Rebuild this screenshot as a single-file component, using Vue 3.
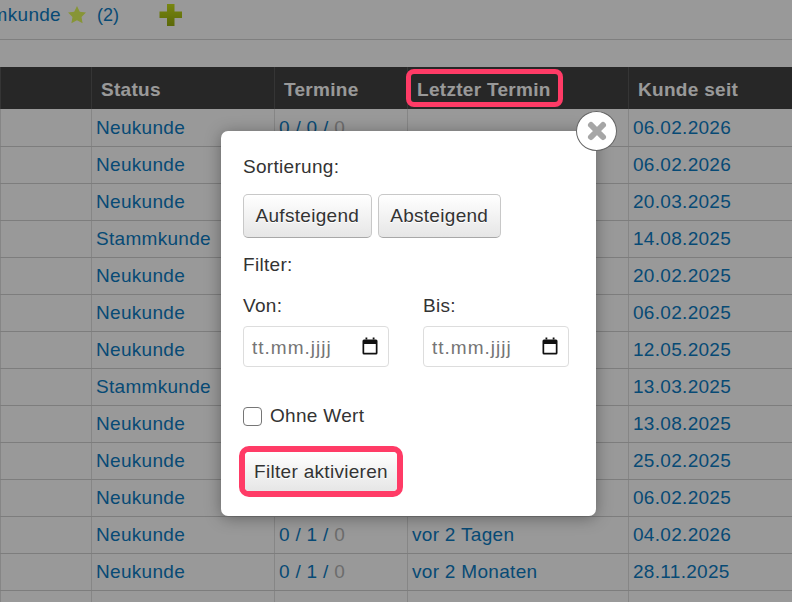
<script setup>
const rows = [
  { status: 'Neukunde', termine: [0, 0, 0], last: '', since: '06.02.2026' },
  { status: 'Neukunde', termine: null, last: '', since: '06.02.2026' },
  { status: 'Neukunde', termine: null, last: '', since: '20.03.2025' },
  { status: 'Stammkunde', termine: null, last: '', since: '14.08.2025' },
  { status: 'Neukunde', termine: null, last: '', since: '20.02.2025' },
  { status: 'Neukunde', termine: null, last: '', since: '06.02.2025' },
  { status: 'Neukunde', termine: null, last: '', since: '12.05.2025' },
  { status: 'Stammkunde', termine: null, last: '', since: '13.03.2025' },
  { status: 'Neukunde', termine: null, last: '', since: '13.08.2025' },
  { status: 'Neukunde', termine: null, last: '', since: '25.02.2025' },
  { status: 'Neukunde', termine: null, last: '', since: '06.02.2025' },
  { status: 'Neukunde', termine: [0, 1, 0], last: 'vor 2 Tagen', since: '04.02.2026' },
  { status: 'Neukunde', termine: [0, 1, 0], last: 'vor 2 Monaten', since: '28.11.2025' },
  { status: 'Neukunde', termine: [0, 1, 0], last: 'vor 3 Monaten', since: '11.11.2025' }
]
</script>

<template>
  <div class="page">
    <div class="topbar">
      <div class="clip"><a>Stammkunde</a></div>
      <svg class="star" width="24" height="24" viewBox="0 0 24 24">
        <path d="M12 3l2.800 5.700 6.200.9-4.500 4.400 1.100 6.200-5.600-2.900-5.600 2.900 1.100-6.200L3 9.600l6.200-.9z" fill="#e2f85c" stroke="#fff" stroke-width="4" stroke-linejoin="round" paint-order="stroke" />
      </svg>
      <a class="count">(2)</a>
      <svg class="plus" width="24" height="24" viewBox="0 0 24 24">
        <defs>
          <linearGradient id="plusfill" x1="0" y1="0" x2="0" y2="1">
            <stop offset="0" stop-color="#c8e01c" />
            <stop offset="1" stop-color="#98ae0e" />
          </linearGradient>
        </defs>
        <path d="M8 1h7.500v7.500H23V15h-7.500v8H8v-8H0.500V8.500H8z" fill="url(#plusfill)" />
      </svg>
    </div>
    <div class="stripe"></div>

    <table class="grid">
      <colgroup>
        <col style="width: 91px" />
        <col style="width: 183px" />
        <col style="width: 133px" />
        <col style="width: 221px" />
        <col style="width: 164px" />
      </colgroup>
      <thead>
        <tr>
          <th></th>
          <th>Status</th>
          <th>Termine</th>
          <th>Letzter Termin</th>
          <th>Kunde seit</th>
        </tr>
      </thead>
      <tbody>
        <tr v-for="(row, i) in rows" :key="i">
          <td></td>
          <td>{{ row.status }}</td>
          <td>
            <template v-if="row.termine">{{ row.termine[0] }} / {{ row.termine[1] }} / <span class="muted">{{ row.termine[2] }}</span></template>
          </td>
          <td>{{ row.last }}</td>
          <td>{{ row.since }}</td>
        </tr>
      </tbody>
    </table>

    <div class="overlay"></div>
    <div class="mark-head"></div>

    <div class="dialog">
      <div class="close">
        <svg width="24" height="24" viewBox="0 0 24 24">
          <path d="M6 6L18 18M18 6L6 18" stroke="#a6a6a6" stroke-width="6" stroke-linecap="round" />
        </svg>
      </div>
      <div class="label">Sortierung:</div>
      <div class="sort">
        <button class="btn">Aufsteigend</button>
        <button class="btn">Absteigend</button>
      </div>
      <div class="label filter">Filter:</div>
      <div class="dates">
        <div class="field">
          <div class="label">Von:</div>
          <div class="date">
            <span>tt.mm.jjjj</span>
            <svg width="18" height="20" viewBox="0 0 18 20">
              <path d="M3 3.500h12A1.500 1.500 0 0 1 16.500 5v12a1.500 1.500 0 0 1-1.500 1.500H3A1.500 1.500 0 0 1 1.500 17V5A1.500 1.500 0 0 1 3 3.500zM3.200 8v8.800h11.600V8z" fill="#111" fill-rule="evenodd" />
              <path d="M4.500 1.500h1.800v2H4.500zM11.700 1.500h1.800v2h-1.800z" fill="#111" />
            </svg>
          </div>
        </div>
        <div class="field">
          <div class="label">Bis:</div>
          <div class="date">
            <span>tt.mm.jjjj</span>
            <svg width="18" height="20" viewBox="0 0 18 20">
              <path d="M3 3.500h12A1.500 1.500 0 0 1 16.500 5v12a1.500 1.500 0 0 1-1.500 1.500H3A1.500 1.500 0 0 1 1.500 17V5A1.500 1.500 0 0 1 3 3.500zM3.200 8v8.800h11.600V8z" fill="#111" fill-rule="evenodd" />
              <path d="M4.500 1.500h1.800v2H4.500zM11.700 1.500h1.800v2h-1.800z" fill="#111" />
            </svg>
          </div>
        </div>
      </div>
      <label class="check">
        <span class="box"></span>
        <span>Ohne Wert</span>
      </label>
      <div class="mark-btn">
        <button class="btn apply">Filter aktivieren</button>
      </div>
    </div>
  </div>
</template>

<style>
html, body {
  margin: 0;
  overflow: hidden;
}
</style>

<style scoped>
.page {
  position: relative;
  width: 792px;
  height: 602px;
  overflow: hidden;
  background: #fff;
  font-family: "Liberation Sans", Arial, sans-serif;
  font-size: 19px;
  letter-spacing: 0.3px;
  color: #333;
}

.topbar {
  display: flex;
  align-items: center;
  height: 28px;
  padding: 1px 0 10px;
  border-bottom: 1px solid #d4d4d4;
  color: #0c7cc4;
}

.clip {
  width: 61px;
  overflow: hidden;
  display: flex;
  justify-content: flex-end;
  white-space: nowrap;
}

.star {
  margin-left: 4px;
}

.count {
  margin-left: 8px;
  font-size: 18px;
  letter-spacing: 0;
}

.plus {
  margin-left: 40px;
  margin-top: -1px;
}

.stripe {
  height: 27px;
}

.grid {
  table-layout: fixed;
  border-collapse: collapse;
  width: 792px;
}

.grid th {
  height: 42px;
  padding: 3px 9px 0;
  background: #414141;
  border-left: 1px solid #595959;
  color: #fff;
  font-weight: bold;
  text-align: left;
  box-sizing: border-box;
}

.grid td {
  height: 37px;
  padding: 1px 4px 0;
  border-left: 1px solid #e0e0e0;
  border-bottom: 1px solid #d0d0d0;
  color: #0c7cc4;
  box-sizing: border-box;
  white-space: nowrap;
}

.muted {
  color: #b5b5b5;
}

.overlay {
  position: absolute;
  inset: 0;
  background: rgba(0, 0, 0, 0.4);
}

.mark-head {
  position: absolute;
  left: 406px;
  top: 69px;
  width: 157px;
  height: 38px;
  box-sizing: border-box;
  border: 5px solid #ff3b66;
  border-radius: 8px;
}

.dialog {
  position: absolute;
  left: 221px;
  top: 131px;
  width: 375px;
  height: 385px;
  box-sizing: border-box;
  padding: 25px 22px 0;
  background: #fff;
  border-radius: 7px;
  box-shadow: 0 2px 16px rgba(0, 0, 0, 0.35);
}

.close {
  position: absolute;
  left: 355px;
  top: -20px;
  width: 41px;
  height: 40px;
  box-sizing: border-box;
  border: 1px solid #666;
  border-radius: 50%;
  background: #fff;
  display: flex;
  align-items: center;
  justify-content: center;
}

.close svg {
  filter: blur(0.6px);
}

.label {
  line-height: 22px;
}

.sort {
  display: flex;
  gap: 6px;
  margin-top: 16px;
}

.btn {
  height: 44px;
  padding: 0 11.5px;
  border: 1px solid #c8c8c8;
  border-bottom-color: #a8a8a8;
  border-radius: 5px;
  background: linear-gradient(#fff, #e6e6e6);
  font: inherit;
  letter-spacing: inherit;
  color: #333;
  text-shadow: 0 1px 0 #fff;
}

.filter {
  margin-top: 16px;
}

.dates {
  display: flex;
  gap: 34px;
  margin-top: 19px;
}

.field .date {
  margin-top: 9px;
}

.date {
  display: flex;
  align-items: center;
  justify-content: space-between;
  width: 146px;
  height: 41px;
  box-sizing: border-box;
  padding: 0 9px 0 8px;
  border: 1px solid #ddd;
  border-radius: 4px;
  color: #757575;
  letter-spacing: 1px;
}

.date span {
  padding-top: 2px;
}

.date svg {
  margin-bottom: 1px;
}

.check {
  display: flex;
  align-items: center;
  gap: 8px;
  margin-top: 39px;
  height: 20px;
}

.box {
  width: 19px;
  height: 19px;
  box-sizing: border-box;
  border: 1px solid #767676;
  border-radius: 4px;
}

.mark-btn {
  display: inline-flex;
  margin-top: 20px;
  margin-left: -4px;
  border: 6px solid #ff3b66;
  border-radius: 10px;
}

.apply {
  width: 152px;
  height: 39px;
  padding: 0;
  border: 0;
  border-radius: 4px;
}
</style>
